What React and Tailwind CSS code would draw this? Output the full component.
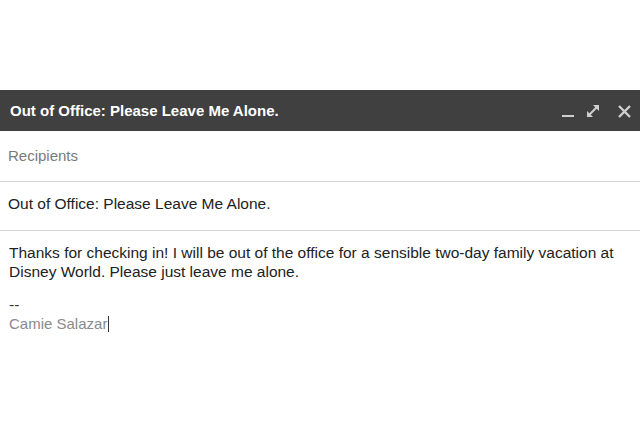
export default function App() {
  return (
    <div className="w-[640px] h-[427px] bg-white pt-[90px] font-['Liberation_Sans',Arial,sans-serif] overflow-hidden">
      <div className="h-[41px] bg-[#404040] flex items-center justify-between pl-[10px] pr-[9px]">
        <span className="text-white font-bold text-[15px] leading-[17px]">
          Out of Office: Please Leave Me Alone.
        </span>
        <div className="flex items-center text-[#cfcfcf]">
          <svg width="14" height="16" viewBox="0 0 14 16" className="mr-[10px]">
            <rect x="1" y="12" width="12" height="2" fill="currentColor" />
          </svg>
          <svg width="16" height="16" viewBox="0 0 16 16" className="mr-[17px]">
            <path d="M3 13 L13 3" stroke="currentColor" strokeWidth="2" />
            <path d="M8 2 H14 V8 Z" fill="currentColor" />
            <path d="M2 8 V14 H8 Z" fill="currentColor" />
          </svg>
          <svg width="13" height="16" viewBox="0 0 13 16">
            <path d="M1 3 L12 14 M12 3 L1 14" stroke="currentColor" strokeWidth="2.4" />
          </svg>
        </div>
      </div>
      <div className="pl-[8px] pt-[16px] pb-[17px] border-b border-[#d4d4d4] text-[15px] leading-[17px] text-[#7a7a7a]">
        Recipients
      </div>
      <div className="pl-[8px] pt-[13px] pb-[18px] border-b border-[#d4d4d4] text-[15.5px] leading-[17px] text-[#222]">
        Out of Office: Please Leave Me Alone.
      </div>
      <div className="pl-[9px] pt-[12px] text-[15.5px] leading-[19px] text-[#222]">
        <p>
          Thanks for checking in! I will be out of the office for a sensible two-day family vacation at
          <br />
          Disney World. Please just leave me alone.
        </p>
        <p className="mt-[14px] text-[#333]">--</p>
        <p className="text-[15px] text-[#8a8a8a] flex items-center">
          Camie Salazar
          <span className="inline-block w-px h-[16px] bg-[#333] ml-[1px]" />
        </p>
      </div>
    </div>
  )
}
